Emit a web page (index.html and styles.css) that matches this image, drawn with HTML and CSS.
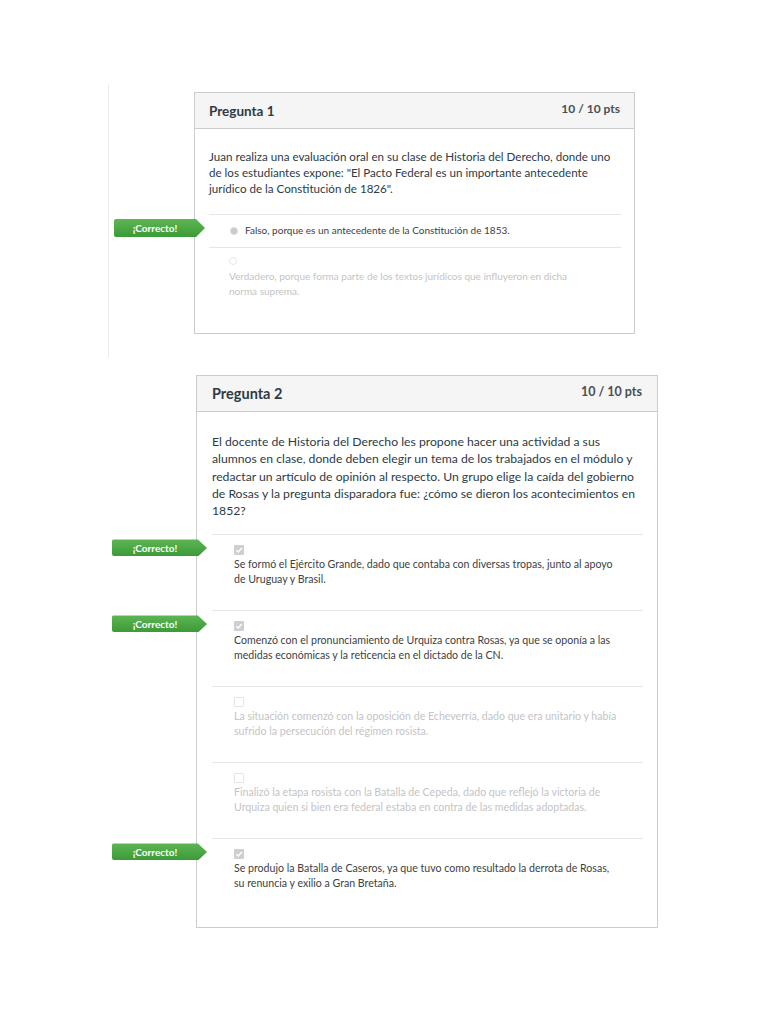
FILE: index.html
```html
<!DOCTYPE html>
<html lang="es">
<head>
<meta charset="utf-8">
<title>Preguntas</title>
<link rel="stylesheet" href="styles.css">
</head>
<body>
<section class="sec1">
  <div class="card card1">
    <div class="head">
      <span class="title">Pregunta 1</span>
      <span class="pts">10 / 10 pts</span>
    </div>
    <div class="body">
      <p class="qtext">Juan realiza una evaluación oral en su clase de Historia del Derecho, donde uno<br>de los estudiantes expone: "El Pacto Federal es un importante antecedente<br>jurídico de la Constitución de 1826".</p>
      <div class="answers">
        <div class="ans inline sel">
          <span class="badge">¡Correcto!</span>
          <span class="radio on"></span>
          <span class="atext">Falso, porque es un antecedente de la Constitución de 1853.</span>
        </div>
        <div class="ans faded">
          <span class="radio"></span>
          <span class="atext">Verdadero, porque forma parte de los textos jurídicos que influyeron en dicha<br>norma suprema.</span>
        </div>
      </div>
    </div>
  </div>
</section>

<section class="sec2">
  <div class="card card2">
    <div class="head">
      <span class="title">Pregunta 2</span>
      <span class="pts">10 / 10 pts</span>
    </div>
    <div class="body">
      <p class="qtext">El docente de Historia del Derecho les propone hacer una actividad a sus<br>alumnos en clase, donde deben elegir un tema de los trabajados en el módulo y<br>redactar un artículo de opinión al respecto. Un grupo elige la caída del gobierno<br>de Rosas y la pregunta disparadora fue: ¿cómo se dieron los acontecimientos en<br>1852?</p>
      <div class="answers">
        <div class="ans sel">
          <span class="badge">¡Correcto!</span>
          <span class="check on"><svg viewBox="0 0 10 10" width="10" height="10"><path d="M2.3 5.2 L4.2 7 L7.8 3" fill="none" stroke="#fff" stroke-width="1.3"/></svg></span>
          <span class="atext">Se formó el Ejército Grande, dado que contaba con diversas tropas, junto al apoyo<br>de Uruguay y Brasil.</span>
        </div>
        <div class="ans sel">
          <span class="badge">¡Correcto!</span>
          <span class="check on"><svg viewBox="0 0 10 10" width="10" height="10"><path d="M2.3 5.2 L4.2 7 L7.8 3" fill="none" stroke="#fff" stroke-width="1.3"/></svg></span>
          <span class="atext">Comenzó con el pronunciamiento de Urquiza contra Rosas, ya que se oponía a las<br>medidas económicas y la reticencia en el dictado de la CN.</span>
        </div>
        <div class="ans faded">
          <span class="check"></span>
          <span class="atext">La situación comenzó con la oposición de Echeverría, dado que era unitario y había<br>sufrido la persecución del régimen rosista.</span>
        </div>
        <div class="ans faded">
          <span class="check"></span>
          <span class="atext">Finalizó la etapa rosista con la Batalla de Cepeda, dado que reflejó la victoria de<br>Urquiza quien si bien era federal estaba en contra de las medidas adoptadas.</span>
        </div>
        <div class="ans sel">
          <span class="badge">¡Correcto!</span>
          <span class="check on"><svg viewBox="0 0 10 10" width="10" height="10"><path d="M2.3 5.2 L4.2 7 L7.8 3" fill="none" stroke="#fff" stroke-width="1.3"/></svg></span>
          <span class="atext">Se produjo la Batalla de Caseros, ya que tuvo como resultado la derrota de Rosas,<br>su renuncia y exilio a Gran Bretaña.</span>
        </div>
      </div>
    </div>
  </div>
</section>
</body>
</html>
```

FILE: styles.css
```css
* { box-sizing: border-box; }
html, body { margin: 0; padding: 0; background: #fff; }
body {
  font-family: Lato, "Open Sans", "Liberation Sans", sans-serif;
  color: #2d3b45;
}
p { margin: 0; }

.sec1 {
  margin-left: 108px;
  margin-top: 84px;
  border-left: 1px solid #ececec;
  padding: 8px 0 23px 85px;
}
.sec2 {
  margin-top: 18px;
  padding-left: 196px;
}

.card {
  border: 1px solid #c9cdd0;
  background: #fff;
}
.card1 { width: 441px; height: 242px; }
.card2 { width: 462px; height: 553px; }

.head {
  display: flex;
  justify-content: space-between;
  align-items: center;
  height: 36px;
  background: #f5f5f5;
  border-bottom: 1px solid #c9cdd0;
}
.title { font-weight: 700; color: #2d3b45; }
.pts { font-weight: 700; color: #4a4f53; padding-bottom: 4px; }

.card1 .head { padding: 0 14px 0 14px; }
.card1 .title { font-size: 13.5px; }
.card1 .pts { font-size: 12px; }
.card2 .head { padding: 0 15px 0 15px; }
.card2 .title { font-size: 14.5px; }
.card2 .pts { font-size: 12.5px; }

.qtext, .atext { white-space: nowrap; }

.card1 .body { padding: 20px 13px 0 14px; }
.card1 .qtext { font-size: 11.6px; line-height: 16px; }
.card1 .answers { margin-top: 17px; }

.card2 .body { padding: 21px 14px 0 15px; }
.card2 .qtext { font-size: 12.2px; line-height: 17.3px; }
.card2 .answers { margin-top: 15px; }

.ans {
  position: relative;
  border-top: 1px solid #e6e6e6;
}
.atext { display: block; }
.sel .atext { color: #3c4144; }
.faded .atext { color: #c4c4c4; }

.card1 .ans { padding: 10px 0 10px 20px; font-size: 10px; line-height: 15px; }
.card1 .ans.inline { display: flex; align-items: center; gap: 7px; padding: 8px 0 9px 21px; }
.card1 .ans.faded { padding-top: 9px; }

.radio {
  display: block;
  width: 8px;
  height: 8px;
  border-radius: 50%;
  border: 1px solid #e6e6e6;
}
.radio.on { background: #c9c9c9; border-color: #dcdcdc; }
.card1 .faded .radio { margin-bottom: 4px; }

.card2 .ans { height: 76px; padding: 10px 0 0 22px; font-size: 10.6px; line-height: 14.3px; }
.check {
  display: block;
  width: 10px;
  height: 10px;
  border: 1px solid #e3e3e3;
  border-radius: 1px;
  margin-bottom: 2px;
}
.check svg { display: block; margin: -1px; }
.check.on { background: #cfcfcf; border-color: #cfcfcf; }

.badge {
  position: absolute;
  top: 4px;
  display: flex;
  align-items: center;
  justify-content: center;
  color: #fff;
  font-size: 10px;
  font-weight: 700;
  background: linear-gradient(#5db653, #3c9a38);
  border-radius: 2px 0 0 2px;
  clip-path: polygon(0 0, calc(100% - 9px) 0, 100% 50%, calc(100% - 9px) 100%, 0 100%);
}
.card1 .badge { left: -95px; width: 91px; height: 18px; padding-right: 9px; top: 4px; }
.card2 .badge { left: -100px; width: 95px; height: 17px; padding-right: 9px; top: 4px; }
```
